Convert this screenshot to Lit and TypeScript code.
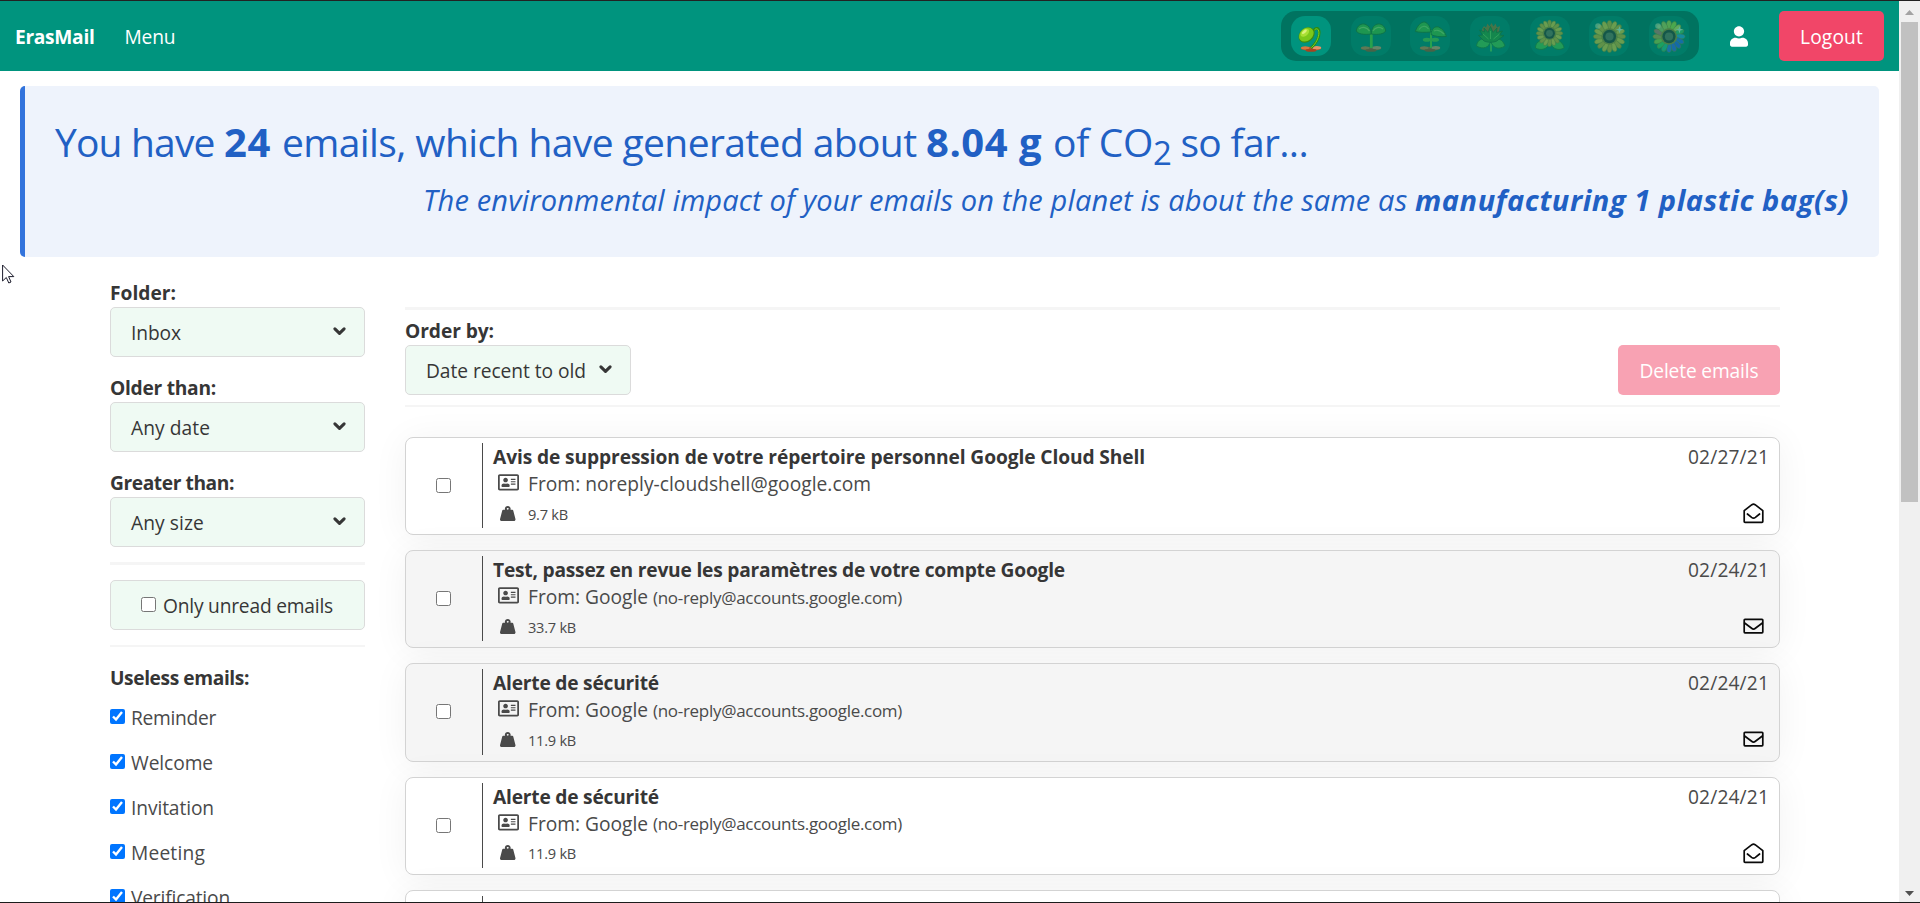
import { LitElement, html, svg, css, nothing } from "lit";
import { customElement, property } from "lit/decorators.js";

/** Text run whose tracking is adjusted so that it fills a given advance width. */
@customElement("fit-text")
class FitText extends LitElement {
  @property({ type: Number }) w = 0;

  static styles = css`
    :host {
      display: inline-block;
      white-space: pre;
    }
  `;

  firstUpdated() {
    const count = (this.textContent ?? "").length;
    const natural = this.getBoundingClientRect().width;
    if (this.w && count) {
      this.style.letterSpacing = `${((this.w - natural) / count).toFixed(4)}px`;
    }
  }

  render() {
    return html`<slot></slot>`;
  }
}

interface Mail {
  subject: string;
  subjectWidth: number;
  from: string;
  fromWidth: number;
  address?: string;
  size: string;
  sizeWidth: number;
  date: string;
  unread: boolean;
}

const google = { from: "From: Google", fromWidth: 120, address: "(no-reply@accounts.google.com)" };

const mails: Mail[] = [
  { subject: "Avis de suppression de votre répertoire personnel Google Cloud Shell", subjectWidth: 652, from: "From: noreply-cloudshell@google.com", fromWidth: 343, size: "9.7 kB", sizeWidth: 40, date: "02/27/21", unread: false },
  { ...google, subject: "Test, passez en revue les paramètres de votre compte Google", subjectWidth: 572, size: "33.7 kB", sizeWidth: 48, date: "02/24/21", unread: true },
  { ...google, subject: "Alerte de sécurité", subjectWidth: 166, size: "11.9 kB", sizeWidth: 48, date: "02/24/21", unread: true },
  { ...google, subject: "Alerte de sécurité", subjectWidth: 166, size: "11.9 kB", sizeWidth: 48, date: "02/24/21", unread: false },
  { ...google, subject: "Alerte de sécurité", subjectWidth: 166, size: "11.9 kB", sizeWidth: 48, date: "02/24/21", unread: false },
];

const filters = [
  { label: "Folder:", labelWidth: 66, value: "Inbox", valueWidth: 50 },
  { label: "Older than:", labelWidth: 106, value: "Any date", valueWidth: 79 },
  { label: "Greater than:", labelWidth: 124, value: "Any size", valueWidth: 73 },
];

const useless: [string, number][] = [
  ["Reminder", 85],
  ["Welcome", 82],
  ["Invitation", 83],
  ["Meeting", 74],
  ["Verification", 99],
];

const chevron = html`<svg class="chevron" viewBox="0 0 13 9" width="13" height="9">
  <path d="M1.9 1.9 6.5 6.4 11.1 1.9" fill="none" stroke="#363636" stroke-width="3.1" stroke-linecap="round" stroke-linejoin="round" />
</svg>`;

const userIcon = html`<svg width="18" height="21" viewBox="0 0 448 512" fill="#fff">
  <path d="M224 256c70.7 0 128-57.3 128-128S294.7 0 224 0 96 57.3 96 128s57.3 128 128 128zm89.6 32h-16.7c-22.2 10.2-46.9 16-72.9 16s-50.6-5.8-72.9-16h-16.7C60.2 288 0 348.2 0 422.4V464c0 26.5 21.5 48 48 48h352c26.5 0 48-21.5 48-48v-41.6c0-74.2-60.2-134.4-134.4-134.4z" />
</svg>`;

const cardIcon = html`<svg width="21" height="18.7" viewBox="0 0 576 512" fill="#4a4a4a">
  <path d="M528 32H48C21.5 32 0 53.5 0 80v352c0 26.5 21.5 48 48 48h480c26.5 0 48-21.5 48-48V80c0-26.5-21.5-48-48-48zm0 400H48V80h480v352zM208 256c35.3 0 64-28.7 64-64s-28.7-64-64-64-64 28.7-64 64 28.7 64 64 64zm-89.6 128h179.2c12.4 0 22.4-8.6 22.4-19.2v-19.2c0-31.8-30.1-57.6-67.2-57.6-10.8 0-18.7 8-44.8 8-26.9 0-33.4-8-44.8-8-37.1 0-67.2 25.8-67.2 57.6v19.2c0 10.6 10 19.2 22.4 19.2zM360 320h112c4.4 0 8-3.6 8-8v-16c0-4.4-3.6-8-8-8H360c-4.4 0-8 3.6-8 8v16c0 4.4 3.6 8 8 8zm0-64h112c4.4 0 8-3.6 8-8v-16c0-4.4-3.6-8-8-8H360c-4.4 0-8 3.6-8 8v16c0 4.4 3.6 8 8 8zm0-64h112c4.4 0 8-3.6 8-8v-16c0-4.4-3.6-8-8-8H360c-4.4 0-8 3.6-8 8v16c0 4.4 3.6 8 8 8z" />
</svg>`;

const weightIcon = html`<svg width="15.5" height="15" viewBox="0 0 512 512" preserveAspectRatio="none" fill="#4a4a4a">
  <path d="M510.28 445.86l-73.03-292.13c-3.8-15.19-16.44-25.72-30.87-25.72h-60.25c3.57-10.05 5.88-20.72 5.88-32 0-53.02-42.98-96-96-96s-96 42.98-96 96c0 11.28 2.3 21.95 5.88 32h-60.25c-14.43 0-27.08 10.54-30.87 25.72L1.72 445.86C-6.61 479.17 16.38 512 48.03 512h415.95c31.64 0 54.63-32.83 46.3-66.14zM256 128c-17.64 0-32-14.36-32-32s14.36-32 32-32 32 14.36 32 32-14.36 32-32 32z" />
</svg>`;

const closedMail = html`<svg width="21" height="21" viewBox="0 0 21 21" fill="none" stroke="#0a0a0a" stroke-width="1.7" stroke-linejoin="round" stroke-linecap="round">
  <rect x="1.2" y="3.3" width="18.6" height="13.6" rx=".8" />
  <path d="M1.6 7 8.6 12.3C9.8 13.2 11.2 13.2 12.4 12.3L19.4 7" />
</svg>`;

const openMail = html`<svg width="21" height="21" viewBox="0 0 21 21" fill="none" stroke="#0a0a0a" stroke-width="1.7" stroke-linejoin="round" stroke-linecap="round">
  <path d="M1.2 7.6 8.9 1.7C9.9 1 11.1 1 12.1 1.7L19.8 7.6V18.6C19.8 19.1 19.4 19.4 19 19.4H2C1.6 19.4 1.2 19.1 1.2 18.6Z" />
  <path d="M4.4 11 8.6 14.4C9.8 15.3 11.2 15.3 12.4 14.4L16.6 11" />
</svg>`;

const soil = svg`<g>
  <ellipse cx="20" cy="32.6" rx="10.4" ry="1.9" fill="#b5532f"/>
  <ellipse cx="14.2" cy="31.8" rx="4.2" ry="1.6" fill="#d9773f"/>
  <ellipse cx="25.8" cy="31.8" rx="4.4" ry="1.7" fill="#e39468"/>
  <ellipse cx="20" cy="34.2" rx="5.4" ry="1.5" fill="#a8431f"/>
</g>`;

const petals = (cx: number, cy: number, r: number, colours: (i: number) => string) =>
  Array.from({ length: 16 }, (_, i) => {
    const angle = i * 22.5;
    return svg`<ellipse cx=${cx} cy=${cy - r * 0.7} rx=${r * 0.16} ry=${r * 0.32} fill=${colours(i)} stroke="#8a7a1c" stroke-width=".5" transform=${`rotate(${angle} ${cx} ${cy})`}/>`;
  });

const sunflower = (cx: number, cy: number, r: number, colours: (i: number) => string) => svg`<g>
  ${petals(cx, cy, r, colours)}
  <circle cx=${cx} cy=${cy} r=${r * 0.52} fill="#a8861c"/>
  <circle cx=${cx} cy=${cy} r=${r * 0.42} fill="#2e2a24"/>
  <circle cx=${cx} cy=${cy} r=${r * 0.26} fill="#6d6650"/>
</g>`;

const gold = (i: number) => (i % 2 ? "#f0c832" : "#d8ac22");
const rainbow = (i: number) =>
  ["#b6d83a", "#a8e02e", "#d5e84c", "#44c464", "#2f9de0", "#2d5ff0", "#2f55f5", "#3a58f5", "#3a6af0", "#2fc08a", "#3fcf56", "#9ed03a", "#c0a03f", "#c8706a", "#a8c05a", "#b6d04a"][i];

const sparkles = svg`<g>
  <circle cx="9" cy="10" r="2.8" fill="#d9f0b4" opacity=".7"/>
  <path d="M30.5 10l.9 2.8 2.8.9-2.8.9-.9 2.8-.9-2.8-2.8-.9 2.8-.9z" fill="#d5f7d8"/>
</g>`;

const stages = [
  svg`<g>${soil}
    <path d="M20 32C25 28 28.5 21 28.3 16.5 28.1 11.4 24.5 10.9 22.6 14.6" fill="none" stroke="#2d8a12" stroke-width="2.5"/>
    <path d="M20.300 31.600C25 28 28.100 21 27.900 16.500 27.700 12.300 24.900 11.800 23.200 14.400" fill="none" stroke="#7cd022" stroke-width="1"/>
    <ellipse cx="15.600" cy="19" rx="8.800" ry="7" transform="rotate(-40 15.600 19)" fill="#3f8a10"/>
    <ellipse cx="15.300" cy="18.600" rx="8" ry="6.200" transform="rotate(-40 15.300 18.600)" fill="#7cc81a"/>
    <ellipse cx="13.800" cy="16.800" rx="5" ry="3.200" transform="rotate(-40 13.800 16.800)" fill="#a9e034"/>
    <ellipse cx="13.400" cy="15.800" rx="3" ry="1.400" transform="rotate(-40 13.400 15.800)" fill="#dcf27c"/></g>`,
  svg`<g>${soil}
    <path d="M20.300 32V15" stroke="#5cd02a" stroke-width="2.800"/>
    <path d="M20.300 18C13 19 7 18 5.300 15 6 9 11 7.200 14 8.200 18 9.500 20 13 20.300 18Z" fill="#46b832" stroke="#1d6a24"/>
    <path d="M20.300 18C27 19 33 18 34.700 15 34 9 29 7.200 26 8.200 22 9.500 20.600 13 20.300 18Z" fill="#46b832" stroke="#1d6a24"/>
    <path d="M8 13C12 10 16 11.500 18.500 15M32 13C28 10 24 11.500 22 15" fill="none" stroke="#96e060" stroke-width="1.300"/></g>`,
  svg`<g>${soil}
    <path d="M21 32V14" stroke="#5cd02a" stroke-width="2"/>
    <path d="M21 16C15 16.500 9 16.500 5.400 15.500 7 10 11 5.500 15 6 18.500 7.500 20.500 11 21 16Z" fill="#46b832" stroke="#1d6a24"/>
    <path d="M21 18.500C21.500 13 24.500 10 28.500 11 32.500 12.500 35.500 16.500 36.400 20.500 30.500 21 24.500 20.500 21 18.500Z" fill="#46b832" stroke="#1d6a24"/>
    <ellipse cx="16.800" cy="23.800" rx="4" ry="2" fill="#56c03a"/><ellipse cx="25" cy="23.800" rx="4" ry="2" fill="#56c03a"/>
    <path d="M9 13.500C12 9.500 16 9 18.500 13M24 15C28 13 31 15 34 18" fill="none" stroke="#8fdc62" stroke-width="1.100"/></g>`,
  svg`<g>
    <path d="M21 26V35.500" stroke="#5cd04b" stroke-width="1.800"/>
    <path d="M6.500 30C7 23.500 14 20 20.500 25 19.500 31.500 13 34 6.500 30ZM35 30C33 23.500 27 20 20.500 25 22.500 31.500 28 34.500 35 30Z" fill="#4fc442" stroke="#237a2b"/>
    <path d="M12 13l2-3 2 1.500 1.500-4 2 3 2-3.500 2 3.500 2-3 1.500 4 3-1.500-1 6-6 4h-6l-5-4z" fill="#a06a24"/>
    <path d="M9.500 14l5 2-.5-4 4 4.500 2.500-6 2.500 6 4-4.500-.5 4.500 6-1.500-3 4 4.500.5-6 4.500C26 27 15 27 13 24L8.500 19.500l4-.5z" fill="#2f962c" stroke="#1c6426" stroke-width=".8"/>
    <path d="M13 18l5.500 5M20.500 15v8M29.500 18l-6 5" stroke="#6cd04f" stroke-width="1"/></g>`,
  svg`<g>
    <path d="M5.500 31C6 25 12 22.500 20 26 18 33.500 11 35 5.500 32ZM34 31C32 25 27 22.500 20 26 22 33.500 29 35 34 32Z" fill="#4fc442" stroke="#237a2b"/>
    ${sunflower(19.5, 17.3, 13, gold)}</g>`,
  svg`<g>${sunflower(20.5, 20.5, 15.8, gold)}${sparkles}</g>`,
  svg`<g>${sunflower(20, 20.5, 15.8, rainbow)}${sparkles}</g>`,
];

@customElement("app-root")
class AppRoot extends LitElement {
  static styles = css`
    :host {
      display: grid;
      grid-template-columns: 1899px 21px;
      width: 1920px;
      height: 903px;
      box-sizing: border-box;
      border-top: 1px solid #222;
      border-bottom: 1px solid #1c1c1c;
      overflow: hidden;
      position: relative;
      background: #fff;
      color: #4a4a4a;
      font: 370 19.2px/30px "Open Sans", "Noto Sans", sans-serif;
    }
    svg { display: block; flex: none; overflow: visible; }
    input { width: 15px; height: 15px; margin: 0; flex: none; }
    .page { height: 901px; overflow: hidden; }

    .nav { display: flex; align-items: center; height: 70px; box-sizing: border-box; padding: 0 15px; background: #00947e; color: #fff; }
    .nav fit-text, .select fit-text, .btn fit-text { padding-top: 2px; }
    .brand { font-weight: 700; margin-right: 30px; }
    .grow { flex: 1; }
    .stages { display: flex; align-items: center; justify-content: space-between; width: 418px; height: 50px; box-sizing: border-box; padding: 0 10px; border-radius: 15px; background: #007360; }
    .stage { width: 40px; height: 40px; border-radius: 14px; background: rgba(0, 148, 126, 0.28); }
    .stage svg { opacity: 0.44; }
    .stage.active { background: #00947e; }
    .stage.active svg { opacity: 1; }
    .user { margin: 0 31px; }
    .btn { display: flex; align-items: center; justify-content: center; height: 50px; border-radius: 5px; background: #f14668; color: #fff; }
    .logout { width: 105px; }
    .delete { width: 162px; background: #f8a2b3; }

    .banner { height: 171px; box-sizing: border-box; margin: 15px 20px 0; padding: 26px 30px 0 30px; border-left: 5px solid #3273dc; border-radius: 5px; background: #eef3fc; color: #2160c4; }
    .headline { display: flex; font-size: 39px; line-height: 60px; }
    .headline .b { font-size: 40px; }
    .sub { font-size: 33px; position: relative; top: 11px; }
    .impact { display: flex; justify-content: flex-end; font-size: 29px; line-height: 45px; font-style: italic; margin-top: 5px; }
    .b { font-weight: 700; }

    .main { display: grid; grid-template-columns: 255px 1375px; gap: 40px; padding: 20px 0 0 110px; }
    .label { display: block; height: 30px; font-weight: 700; color: #363636; }
    .label fit-text { padding-top: 1px; }
    .select { display: flex; align-items: center; justify-content: space-between; height: 50px; box-sizing: border-box; padding: 0 18px 0 20px; border: 1px solid #dbdbdb; border-radius: 5px; background: #effaf3; color: #363636; }
    .chevron { position: relative; top: -1px; }
    .field { margin-bottom: 15px; }
    .side .rule { height: 3px; background: #f5f5f5; margin-bottom: 15px; }
    .side .rule.thin { height: 2px; margin: 15px 0; }
    .only { justify-content: flex-start; padding-left: 30px; gap: 7px; }
    .option { display: flex; align-items: center; gap: 6px; height: 30px; margin-bottom: 15px; }
    .options { padding-top: 11px; }
    .options input { position: relative; top: -2px; }
    .only input { position: relative; top: -1px; }

    .toolbar { margin-top: 30px; border-top: 3px solid #f5f5f5; border-bottom: 2px solid #f5f5f5; height: 90px; padding-top: 5px; margin-bottom: 29.8px; }
    .tools { display: flex; justify-content: space-between; }
    .order { width: 226px; padding-right: 18px; }

    .card { display: grid; grid-template-columns: 76px 1px 1fr auto; height: 98.25px; box-sizing: border-box; margin-bottom: 15px; border: 1px solid #d3d3d3; border-radius: 8px; background: #fff; box-shadow: 0 3px 36px rgba(10, 10, 10, 0.055); }
    .card.unread { background: #f5f5f5; }
    .pick { display: flex; align-items: center; padding: 0 0 1px 30px; }
    .divider { margin: 5px 0 6px; background: #4a4a4a; }
    .info { padding: 4px 0 0 10px; }
    .subject { display: block; height: 28px; font-weight: 700; color: #363636; }
    .row { display: flex; align-items: center; height: 30px; }
    .row .glyph { display: flex; justify-content: center; width: 21px; margin: 0 9px 0 5px; }
    .from .glyph { margin-top: -3px; }
    .from { height: 28px; }
    .addr { font-size: 17px; margin-left: 5px; padding-top: 1px; }
    .size { font-size: 14.6px; height: 31.5px; }
    .size .glyph { margin: -1px 9.5px 0 4.5px; }
    .side-info { display: flex; flex-direction: column; align-items: flex-end; padding: 4px 10px 0 0; }
    .state { margin-top: 31px; margin-right: 5px; }

    .scroll { display: flex; flex-direction: column; align-items: center; background: #f0f0f0; padding: 9px 0 6px; height: 901px; box-sizing: border-box; }
    .thumb { width: 17px; height: 480px; margin: 7px 0 auto 0; background: #c1c1c1; }
    .cursor { position: absolute; left: 2px; top: 263px; }
  `;

  private card(m: Mail) {
    return html`<article class="card ${m.unread ? "unread" : ""}">
      <div class="pick"><input type="checkbox" /></div>
      <div class="divider"></div>
      <div class="info">
        <span class="subject"><fit-text w=${m.subjectWidth}>${m.subject}</fit-text></span>
        <div class="row from">
          <span class="glyph">${cardIcon}</span><fit-text w=${m.fromWidth}>${m.from}</fit-text>
          ${m.address ? html`<fit-text class="addr" w="249">${m.address}</fit-text>` : nothing}
        </div>
        <div class="row size"><span class="glyph">${weightIcon}</span><fit-text w=${m.sizeWidth}>${m.size}</fit-text></div>
      </div>
      <div class="side-info">
        <fit-text w="81">${m.date}</fit-text>
        <span class="state">${m.unread ? closedMail : openMail}</span>
      </div>
    </article>`;
  }

  render() {
    return html`
      <div class="page">
        <nav class="nav">
          <fit-text class="brand" w="79.5">ErasMail</fit-text>
          <fit-text w="51">Menu</fit-text>
          <span class="grow"></span>
          <div class="stages">
            ${stages.map((s, i) => html`<span class="stage ${i === 0 ? "active" : ""}"><svg width="40" height="40" viewBox="0 0 40 40">${s}</svg></span>`)}
          </div>
          <span class="user">${userIcon}</span>
          <span class="btn logout"><fit-text w="63">Logout</fit-text></span>
        </nav>
        <section class="banner">
          <div class="headline">
            <fit-text w="169">You have </fit-text><fit-text class="b" w="58">24 </fit-text><fit-text w="644">emails, which have generated about </fit-text><fit-text class="b" w="127">8.04 g </fit-text><fit-text w="100">of CO</fit-text><fit-text class="sub" w="18">2</fit-text><fit-text w="137"> so far...</fit-text>
          </div>
          <div class="impact">
            <fit-text w="992">The environmental impact of your emails on the planet is about the same as </fit-text><fit-text class="b" w="434">manufacturing 1 plastic bag(s)</fit-text>
          </div>
        </section>
        <main class="main">
          <aside class="side">
            ${filters.map(
              (f) => html`<div class="field">
                <span class="label"><fit-text w=${f.labelWidth}>${f.label}</fit-text></span>
                <div class="select"><fit-text w=${f.valueWidth}>${f.value}</fit-text>${chevron}</div>
              </div>`
            )}
            <div class="rule"></div>
            <label class="select only"><input type="checkbox" /><fit-text w="170">Only unread emails</fit-text></label>
            <div class="rule thin"></div>
            <div class="label"><fit-text w="139">Useless emails:</fit-text></div>
            <div class="options">
              ${useless.map(([name, w]) => html`<label class="option"><input type="checkbox" checked /><fit-text w=${w}>${name}</fit-text></label>`)}
            </div>
          </aside>
          <section>
            <div class="toolbar">
              <span class="label"><fit-text w="89">Order by:</fit-text></span>
              <div class="tools">
                <div class="select order"><fit-text w="160">Date recent to old</fit-text>${chevron}</div>
                <span class="btn delete"><fit-text w="119">Delete emails</fit-text></span>
              </div>
            </div>
            ${mails.map((m) => this.card(m))}
          </section>
        </main>
      </div>
      <div class="scroll">
        <svg width="9" height="5" viewBox="0 0 9 5"><path d="M0 5 4.5 0 9 5Z" fill="#a3a3a3" /></svg>
        <div class="thumb"></div>
        <svg width="9" height="5" viewBox="0 0 9 5"><path d="M0 0 4.5 5 9 0Z" fill="#505050" /></svg>
      </div>
      <svg class="cursor" width="13" height="20" viewBox="0 0 13 20">
        <path d="M.6 1V17L4.3 13.5 6.8 19 9 18 6.6 12.6H11.8Z" fill="#fff" stroke="#1a1a2a" stroke-width="1" />
      </svg>
    `;
  }
}
